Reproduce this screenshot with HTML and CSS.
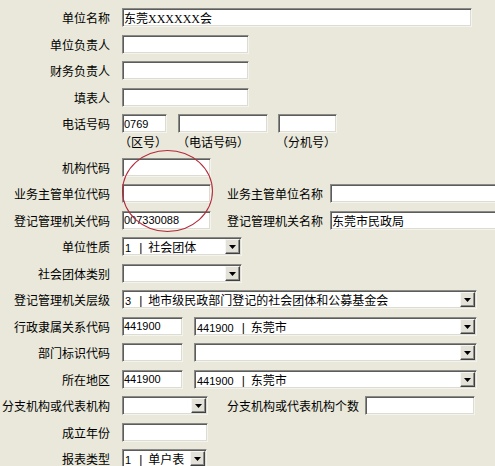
FILE: index.html
```html
<!DOCTYPE html>
<html lang="zh-CN">
<head>
<meta charset="utf-8">
<title>单位基本信息</title>
<link rel="stylesheet" href="styles.css">
</head>
<body>
<div class="form">
  <div class="row"><span class="lbl">单位名称</span><input class="fld serif w350" value="东莞XXXXXX会"></div>
  <div class="row"><span class="lbl">单位负责人</span><input class="fld w127" value=""></div>
  <div class="row"><span class="lbl">财务负责人</span><input class="fld w127" value=""></div>
  <div class="row"><span class="lbl">填表人</span><input class="fld w127" value=""></div>
  <div class="group">
    <div class="row"><span class="lbl">电话号码</span><input class="fld num w45" value="0769"><input class="fld num w90 ml11" value=""><input class="fld num w59 ml10" value=""></div>
    <div class="caps"><span class="cap c1">（区号）</span><span class="cap c2">（电话号码）</span><span class="cap">（分机号）</span></div>
  </div>
  <div class="row"><span class="lbl">机构代码</span><input class="fld num w89" value=""></div>
  <div class="row"><span class="lbl">业务主管单位代码</span><input class="fld num w89" value=""><span class="side s1">业务主管单位名称</span><input class="fld w170" value=""></div>
  <div class="row"><span class="lbl">登记管理机关代码</span><input class="fld num w89" value="007330088"><span class="side s1">登记管理机关名称</span><input class="fld w170" value="东莞市民政局"></div>
  <div class="row"><span class="lbl">单位性质</span><div class="combo w120"><span class="txt"><span class="code">1</span><span class="sep">|</span>社会团体</span><span class="btn"><svg width="7" height="4" viewBox="0 0 7 4"><polygon points="0,0 7,0 3.5,4" fill="#000"/></svg></span></div></div>
  <div class="row"><span class="lbl">社会团体类别</span><div class="combo w120"><span class="txt"></span><span class="btn"><svg width="7" height="4" viewBox="0 0 7 4"><polygon points="0,0 7,0 3.5,4" fill="#000"/></svg></span></div></div>
  <div class="row"><span class="lbl">登记管理机关层级</span><div class="combo w355"><span class="txt"><span class="code">3</span><span class="sep">|</span>地市级民政部门登记的社会团体和公募基金会</span><span class="btn"><svg width="7" height="4" viewBox="0 0 7 4"><polygon points="0,0 7,0 3.5,4" fill="#000"/></svg></span></div></div>
  <div class="row"><span class="lbl">行政隶属关系代码</span><input class="fld num w61" value="441900"><div class="combo w283 ml11"><span class="txt"><span class="code">441900</span><span class="sep">|</span>东莞市</span><span class="btn"><svg width="7" height="4" viewBox="0 0 7 4"><polygon points="0,0 7,0 3.5,4" fill="#000"/></svg></span></div></div>
  <div class="row"><span class="lbl">部门标识代码</span><input class="fld num w61" value=""><div class="combo w283 ml11"><span class="txt"></span><span class="btn"><svg width="7" height="4" viewBox="0 0 7 4"><polygon points="0,0 7,0 3.5,4" fill="#000"/></svg></span></div></div>
  <div class="row"><span class="lbl">所在地区</span><input class="fld num w61" value="441900"><div class="combo w283 ml11"><span class="txt"><span class="code">441900</span><span class="sep">|</span>东莞市</span><span class="btn"><svg width="7" height="4" viewBox="0 0 7 4"><polygon points="0,0 7,0 3.5,4" fill="#000"/></svg></span></div></div>
  <div class="row"><span class="lbl">分支机构或代表机构</span><div class="combo w86"><span class="txt"></span><span class="btn"><svg width="7" height="4" viewBox="0 0 7 4"><polygon points="0,0 7,0 3.5,4" fill="#000"/></svg></span></div><span class="side s2">分支机构或代表机构个数</span><input class="fld num w110" value=""></div>
  <div class="row"><span class="lbl">成立年份</span><input class="fld num w86" value=""></div>
  <div class="row"><span class="lbl">报表类型</span><div class="combo w85"><span class="txt"><span class="code">1</span><span class="sep">|</span>单户表</span><span class="btn"><svg width="7" height="4" viewBox="0 0 7 4"><polygon points="0,0 7,0 3.5,4" fill="#000"/></svg></span></div></div>
</div>
<div class="circle"></div>
</body>
</html>
```

FILE: styles.css
```css
html, body {
  margin: 0;
  padding: 0;
  overflow: hidden;
}
body {
  background: #e9e8da;
  color: #000;
  font-family: "Noto Sans CJK SC", "Liberation Sans", sans-serif;
  font-size: 12px;
  width: 495px;
  height: 466px;
  position: relative;
}
.form {
  display: flex;
  flex-direction: column;
  gap: 7.5px;
  padding-top: 8px;
}
.row {
  display: flex;
  align-items: center;
  height: 19px;
  white-space: nowrap;
}
.lbl {
  flex: none;
  width: 110px;
  margin-right: 12px;
  text-align: right;
  line-height: 17px;
}
.side {
  flex: none;
  line-height: 17px;
}
.s1 { margin-left: 16px; margin-right: 7px; }
.s2 { margin-left: 19px; margin-right: 6px; }

.fld {
  -webkit-appearance: none;
  appearance: none;
  flex: none;
  box-sizing: border-box;
  height: 19px;
  margin: 0;
  padding: 0 1px;
  background: #fff;
  border-style: solid;
  border-width: 1px;
  border-color: #8a8a86 #f4f4ee #f4f4ee #8a8a86;
  box-shadow: inset 1px 1px 0 #5c5c5a, inset -1px -1px 0 #dedcd2;
  font-family: "Noto Sans CJK SC", sans-serif;
  font-size: 12px;
  line-height: 15px;
  color: #000;
  outline: none;
}
.fld.num {
  font-family: "Liberation Sans", "Noto Sans CJK SC", sans-serif;
  font-size: 11px;
}
.fld.serif {
  font-family: "Liberation Serif", "Noto Sans CJK SC", serif;
  font-size: 12px;
}
.w45 { width: 45px; }
.w59 { width: 59px; }
.w61 { width: 61px; }
.w85 { width: 85px; }
.w86 { width: 86px; }
.w89 { width: 89px; }
.w90 { width: 90px; }
.w110 { width: 110px; }
.w120 { width: 120px; }
.w127 { width: 127px; }
.w170 { width: 170px; }
.w283 { width: 283px; }
.w350 { width: 350px; }
.w355 { width: 355px; }
.ml10 { margin-left: 10px; }
.ml11 { margin-left: 11px; }

.caps {
  display: flex;
  height: 17px;
  line-height: 17px;
  padding-left: 119px;
  white-space: nowrap;
}
.cap { flex: none; }
.c1 { width: 58px; }
.c2 { width: 99px; }

.combo {
  flex: none;
  display: flex;
  box-sizing: border-box;
  height: 19px;
  background: #fff;
  border-style: solid;
  border-width: 1px;
  border-color: #8a8a86 #f4f4ee #f4f4ee #8a8a86;
  box-shadow: inset 1px 1px 0 #5c5c5a, inset -1px -1px 0 #dedcd2;
  padding: 1px;
}
.combo .txt {
  flex: 1;
  min-width: 0;
  overflow: hidden;
  padding-left: 1px;
  line-height: 15px;
  white-space: nowrap;
}
.code {
  font-family: "Liberation Sans", sans-serif;
  font-size: 11px;
}
.sep {
  font-family: "Liberation Sans", sans-serif;
  font-size: 12px;
  margin: 0 6px 0 8px;
}
.combo .btn {
  flex: none;
  width: 15px;
  height: 15px;
  box-sizing: border-box;
  display: flex;
  align-items: center;
  justify-content: center;
  background: #e4e2d8;
  border-style: solid;
  border-width: 1px;
  border-color: #f6f6f2 #404040 #404040 #f6f6f2;
  box-shadow: inset -1px -1px 0 #8c8c88;
  padding-top: 1px;
}
.combo .btn svg { display: block; }

.circle {
  position: absolute;
  left: 122px;
  top: 150px;
  width: 91px;
  height: 82px;
  box-sizing: border-box;
  border: 1px solid #b52a3a;
  border-radius: 50%;
  pointer-events: none;
}
```
